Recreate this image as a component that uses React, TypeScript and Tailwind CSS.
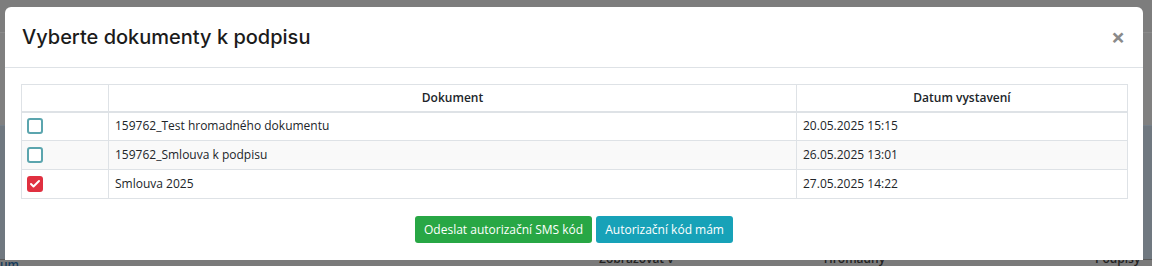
import { Check } from "lucide-react";

type Doc = { name: string; date: string; checked: boolean };

const docs: Doc[] = [
  { name: "159762_Test hromadného dokumentu", date: "20.05.2025 15:15", checked: false },
  { name: "159762_Smlouva k podpisu", date: "26.05.2025 13:01", checked: false },
  { name: "Smlouva 2025", date: "27.05.2025 14:22", checked: true },
];

function Checkbox({ checked }: { checked: boolean }) {
  if (checked) {
    return (
      <span className="flex h-4 w-4 items-center justify-center rounded-[3px] bg-[#e03040]">
        <Check className="h-3 w-3 text-white" strokeWidth={4} />
      </span>
    );
  }
  return <span className="block h-4 w-4 rounded-[3px] border-2 border-[#5ba5ae] bg-white" />;
}

export default function App() {
  return (
    <div className="relative h-[266px] w-[1152px] overflow-hidden bg-[#7f7f7f] font-['Open_Sans',sans-serif]">
      {/* dimmed page behind the modal */}
      <div className="flex h-full flex-col">
        <div className="h-[33px] border-b border-[#8a8a8a] bg-[#7d7d7d]" />
        <div className="h-[92px] bg-[#808080]" />
        <div className="flex-1 border-t border-[#75808a] bg-[#707880]" />
        <div className="flex h-[7px] items-start border-t border-[#5a5a5a] bg-[#7a7a7a] text-[12px] font-semibold leading-[10px] text-[#222]">
          <span className="text-[#143a5c]">um</span>
          <span className="ml-[580px] -mt-[6px]">Zobrazovat v</span>
          <span className="ml-[150px] -mt-[6px]">Hromadný</span>
          <span className="ml-[210px] -mt-[6px]">Podpisy</span>
        </div>
      </div>

      {/* modal */}
      <div className="absolute left-[5px] top-[7px] w-[1138px] rounded-t-[6px] bg-white">
        <div className="flex h-[61px] items-center justify-between border-b border-[#dee2e6] pl-[17px] pr-[18px]">
          <h2 className="font-['Inter',sans-serif] text-[20px] font-medium text-[#1b1b1b]">
            Vyberte dokumenty k podpisu
          </h2>
          <span className="text-[24px] font-bold leading-none text-[#8a8a8a]">×</span>
        </div>

        <div className="px-4 pt-4 pb-[17px]">
          <table className="w-[1106px] table-fixed border-collapse text-[12px] text-[#212529]">
            <colgroup>
              <col className="w-[87px]" />
              <col className="w-[688px]" />
              <col className="w-[331px]" />
            </colgroup>
            <thead>
              <tr className="h-[27px]">
                <th className="border border-b-2 border-[#dee2e6]" />
                <th className="border border-b-2 border-[#dee2e6] font-semibold">Dokument</th>
                <th className="border border-b-2 border-[#dee2e6] font-semibold">Datum vystavení</th>
              </tr>
            </thead>
            <tbody>
              {docs.map((d, i) => (
                <tr key={i} className={`h-[29px] ${i % 2 === 1 ? "bg-[#f9f9f9]" : "bg-white"}`}>
                  <td className="border border-[#dee2e6] px-[5px]">
                    <Checkbox checked={d.checked} />
                  </td>
                  <td className="border border-[#dee2e6] px-[6px]">{d.name}</td>
                  <td className="border border-[#dee2e6] px-[6px]">{d.date}</td>
                </tr>
              ))}
            </tbody>
          </table>

          <div className="mt-[17px] flex justify-center gap-1">
            <button className="h-[27px] rounded-[3px] bg-[#28a745] px-[9px] text-[12px] text-white">
              Odeslat autorizační SMS kód
            </button>
            <button className="h-[27px] rounded-[3px] bg-[#17a2b8] px-[9px] text-[12px] text-white">
              Autorizační kód mám
            </button>
          </div>
        </div>
      </div>
    </div>
  );
}
